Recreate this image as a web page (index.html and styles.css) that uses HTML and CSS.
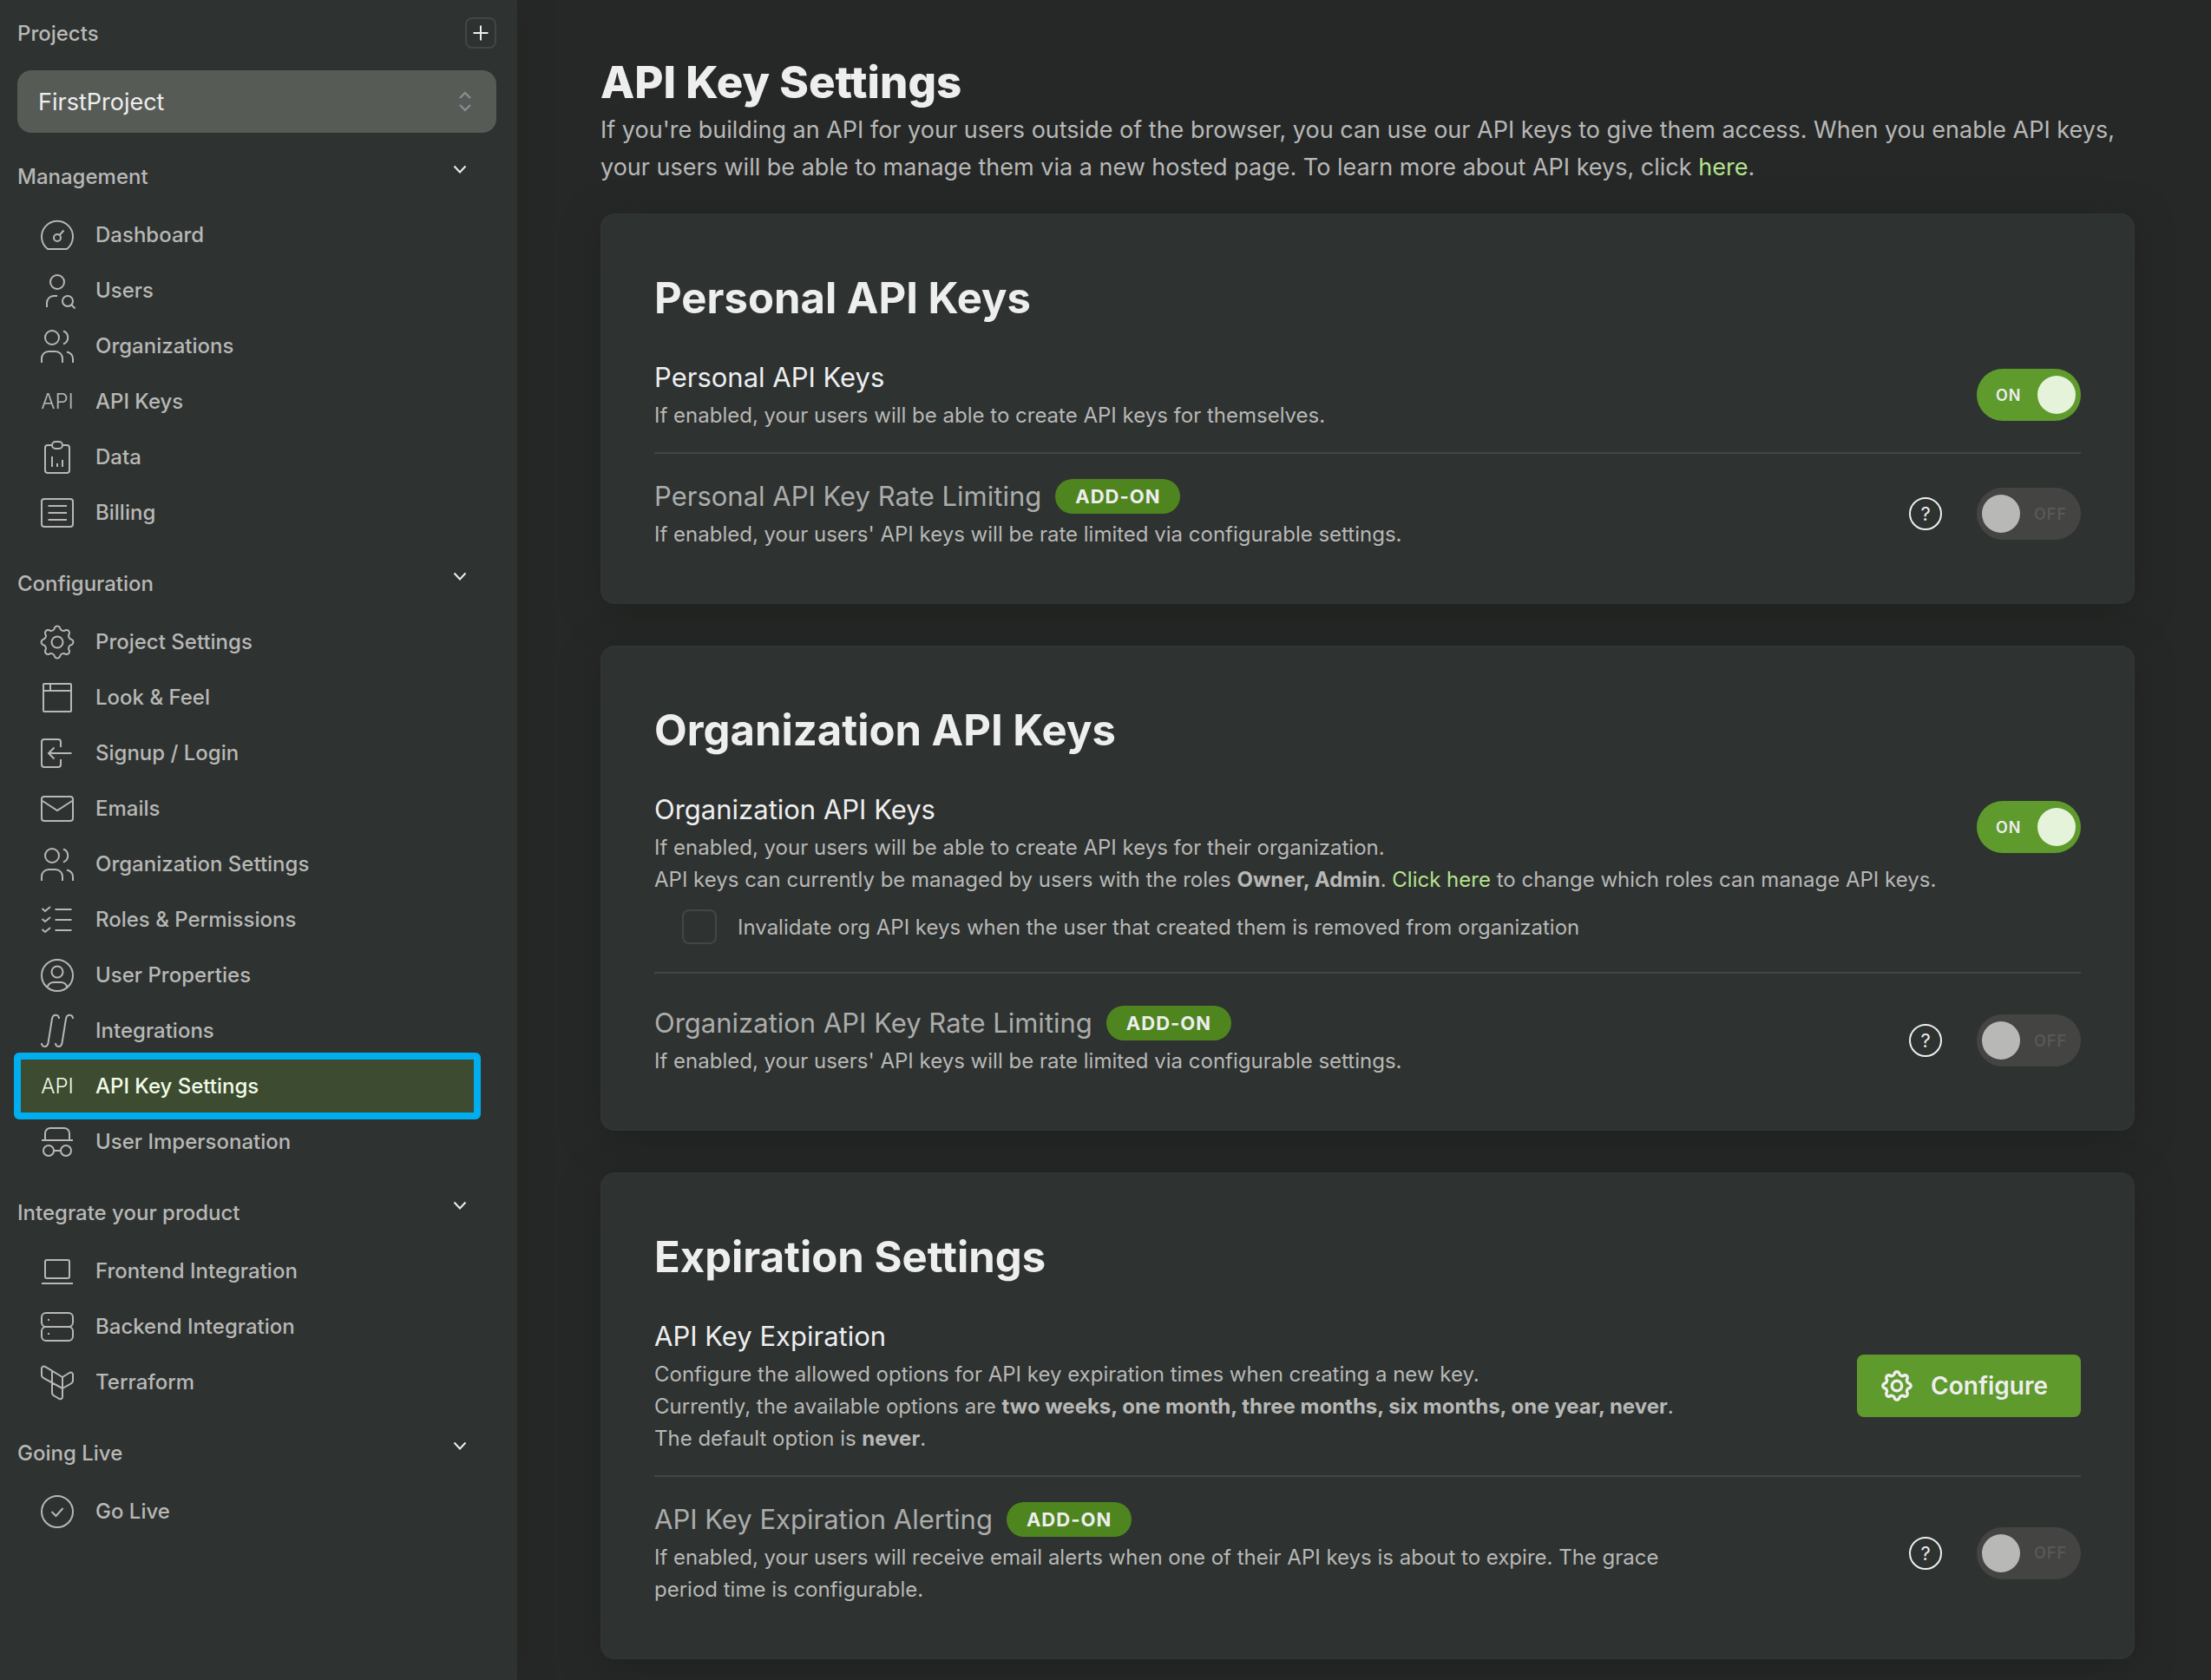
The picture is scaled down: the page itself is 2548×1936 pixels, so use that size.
FILE: index.html
```html
<!DOCTYPE html>
<html lang="en">
<head>
<meta charset="utf-8">
<meta name="viewport" content="width=device-width, initial-scale=1">
<title>API Key Settings</title>
<link rel="stylesheet" href="styles.css">
</head>
<body>
<svg class="sprite" aria-hidden="true">
  <symbol id="i-dashboard" viewBox="0 0 48 48"><path d="M13 40A18 18 0 1 1 35 40Z"/><circle cx="24" cy="27" r="4"/><path d="M27 23.500l4.500-5"/></symbol>
  <symbol id="i-users" viewBox="0 0 48 48"><circle cx="24" cy="14" r="8"/><path d="M12 43v-5a8 8 0 0 1 8-8h4"/><circle cx="36" cy="36" r="6"/><path d="M40.500 40.500l4 4"/></symbol>
  <symbol id="i-orgs" viewBox="0 0 48 48"><circle cx="18" cy="14" r="8"/><path d="M31 6.500a8 8 0 0 1 0 15M6 43v-5a8 8 0 0 1 8-8h8a8 8 0 0 1 8 8v5M35 30.500c4 1 7 4 7 8V43"/></symbol>
  <symbol id="i-data" viewBox="0 0 48 48"><path d="M17.500 10H13a3 3 0 0 0-3 3v26a3 3 0 0 0 3 3h22a3 3 0 0 0 3-3V13a3 3 0 0 0-3-3h-4.500M18 23v12M24 31v4M30 27v8"/><rect x="18" y="6" width="12" height="8" rx="4"/></symbol>
  <symbol id="i-billing" viewBox="0 0 48 48"><rect x="6" y="8" width="36" height="32" rx="3"/><path d="M13.500 16H35M13.500 24H35M13.500 32H35"/></symbol>
  <symbol id="i-gear" viewBox="0 0 48 48"><path d="M40.740 21.050A3.400 3.400 0 0 1 40.740 26.950A4.200 4.200 0 0 0 37.930 33.750A3.400 3.400 0 0 1 33.750 37.930A4.200 4.200 0 0 0 26.950 40.740A3.400 3.400 0 0 1 21.050 40.740A4.200 4.200 0 0 0 14.250 37.930A3.400 3.400 0 0 1 10.070 33.750A4.200 4.200 0 0 0 7.260 26.950A3.400 3.400 0 0 1 7.260 21.050A4.200 4.200 0 0 0 10.070 14.250A3.400 3.400 0 0 1 14.250 10.070A4.200 4.200 0 0 0 21.050 7.260A3.400 3.400 0 0 1 26.950 7.260A4.200 4.200 0 0 0 33.750 10.070A3.400 3.400 0 0 1 37.930 14.250A4.200 4.200 0 0 0 40.740 21.050Z"/><circle cx="24" cy="24" r="6.500"/></symbol>
  <symbol id="i-window" viewBox="0 0 48 48"><rect x="8" y="8" width="32" height="32" rx="1"/><path d="M8 16h32M16 8v8"/></symbol>
  <symbol id="i-login" viewBox="0 0 48 48"><path d="M28 17v-6a3 3 0 0 0-3-3H9a3 3 0 0 0-3 3v26a3 3 0 0 0 3 3h16a3 3 0 0 0 3-3v-6M40.500 24H14M20.500 17.500L14 24l6.500 6.500"/></symbol>
  <symbol id="i-mail" viewBox="0 0 48 48"><rect x="6" y="10" width="36" height="28" rx="3"/><path d="M7 15l17 11 17-11"/></symbol>
  <symbol id="i-roles" viewBox="0 0 48 48"><path d="M6.500 11l3.500 3 6-5M6.500 23l3.500 3 6-5M6.500 35l3.500 3 6-5M21.500 12h19M21.500 24h19M21.500 36h19"/></symbol>
  <symbol id="i-profile" viewBox="0 0 48 48"><circle cx="24" cy="24" r="18"/><circle cx="24" cy="20" r="6.500"/><path d="M12.500 38c1-4 4-6 7.500-6h8c3.500 0 6.500 2 7.500 6"/></symbol>
  <symbol id="i-integrations" viewBox="0 0 48 48"><path d="M6 38c0 5 6.500 5.500 7.500 0L18 10c1-6 8-5.500 8 0M22 38c0 5 6.500 5.500 7.500 0L34 10c1-6 8-5.500 8 0"/></symbol>
  <symbol id="i-incognito" viewBox="0 0 48 48"><path d="M10 22v-8a6 6 0 0 1 6-6h16a6 6 0 0 1 6 6v8M6 22h36M20 34h8"/><circle cx="14" cy="34" r="6"/><circle cx="34" cy="34" r="6"/></symbol>
  <symbol id="i-laptop" viewBox="0 0 48 48"><rect x="10" y="11" width="28" height="21" rx="2"/><path d="M6 38h36"/></symbol>
  <symbol id="i-server" viewBox="0 0 48 48"><rect x="6" y="8" width="36" height="16" rx="5"/><rect x="6" y="24" width="36" height="16" rx="5"/><path d="M13 16h2M13 32h2"/></symbol>
  <symbol id="i-terraform" viewBox="0 0 48 48"><path d="M6 8c0-2 2-3 4-2l20 12v13L8 19c-1.500-1-2-2-2-3zM18 11v25c0 1 .500 2 1.500 3l6 3.500c2 1.500 4.500.500 4.500-2V18l8-5c2-1 4 0 4 2v7c0 1-.500 2-1.500 3L30 31"/></symbol>
  <symbol id="i-check" viewBox="0 0 48 48"><circle cx="24" cy="24" r="18"/><path d="M17.500 24l5 5 8-9"/></symbol>
  <symbol id="i-down" viewBox="0 0 16 16"><path d="M1.500 4.500L8 11.500l6.500-7"/></symbol>
</svg>
<div class="layout">
  <aside class="sidebar">
    <div class="projects">
      <span>Projects</span>
      <button class="add" type="button" aria-label="New project"><svg viewBox="0 0 20 20"><path d="M10 1.500v17M1.500 10h17"/></svg></button>
    </div>
    <button class="picker" type="button"><span>FirstProject</span><svg viewBox="0 0 16 24"><path d="M2 8l6-6 6 6M2 16l6 6 6-6"/></svg></button>
    <nav class="nav">
      <section>
        <button class="group" type="button">Management<svg><use href="#i-down"/></svg></button>
        <ul>
          <li><a href="#"><svg><use href="#i-dashboard"/></svg>Dashboard</a></li>
          <li><a href="#"><svg><use href="#i-users"/></svg>Users</a></li>
          <li><a href="#"><svg><use href="#i-orgs"/></svg>Organizations</a></li>
          <li><a href="#"><span class="api" aria-hidden="true">API</span>API Keys</a></li>
          <li><a href="#"><svg><use href="#i-data"/></svg>Data</a></li>
          <li><a href="#"><svg><use href="#i-billing"/></svg>Billing</a></li>
        </ul>
      </section>
      <section>
        <button class="group" type="button">Configuration<svg><use href="#i-down"/></svg></button>
        <ul>
          <li><a href="#"><svg><use href="#i-gear"/></svg>Project Settings</a></li>
          <li><a href="#"><svg><use href="#i-window"/></svg>Look &amp; Feel</a></li>
          <li><a href="#"><svg><use href="#i-login"/></svg>Signup / Login</a></li>
          <li><a href="#"><svg><use href="#i-mail"/></svg>Emails</a></li>
          <li><a href="#"><svg><use href="#i-orgs"/></svg>Organization Settings</a></li>
          <li><a href="#"><svg><use href="#i-roles"/></svg>Roles &amp; Permissions</a></li>
          <li><a href="#"><svg><use href="#i-profile"/></svg>User Properties</a></li>
          <li><a href="#"><svg><use href="#i-integrations"/></svg>Integrations</a></li>
          <li><a class="active" href="#" aria-current="page"><span class="api" aria-hidden="true">API</span>API Key Settings</a></li>
          <li><a href="#"><svg><use href="#i-incognito"/></svg>User Impersonation</a></li>
        </ul>
      </section>
      <section>
        <button class="group" type="button">Integrate your product<svg><use href="#i-down"/></svg></button>
        <ul>
          <li><a href="#"><svg><use href="#i-laptop"/></svg>Frontend Integration</a></li>
          <li><a href="#"><svg><use href="#i-server"/></svg>Backend Integration</a></li>
          <li><a href="#"><svg><use href="#i-terraform"/></svg>Terraform</a></li>
        </ul>
      </section>
      <section>
        <button class="group" type="button">Going Live<svg><use href="#i-down"/></svg></button>
        <ul>
          <li><a href="#"><svg><use href="#i-check"/></svg>Go Live</a></li>
        </ul>
      </section>
    </nav>
  </aside>

  <main class="main">
    <header class="intro">
      <h1>API Key Settings</h1>
      <p>If you're building an API for your users outside of the browser, you can use our API keys to give them access. When you enable API keys, your users will be able to manage them via a new hosted page. To learn more about API keys, click <a href="#">here</a>.</p>
    </header>

    <section class="card">
      <h2>Personal API Keys</h2>
      <div class="row">
        <div class="text">
          <h3 id="personal">Personal API Keys</h3>
          <p>If enabled, your users will be able to create API keys for themselves.</p>
        </div>
        <label class="toggle"><input type="checkbox" role="switch" aria-labelledby="personal" checked><span>ON</span></label>
      </div>
      <hr>
      <div class="row">
        <div class="text">
          <h3 class="muted"><span id="personal-rate">Personal API Key Rate Limiting</span><span class="badge">ADD-ON</span></h3>
          <p>If enabled, your users' API keys will be rate limited via configurable settings.</p>
        </div>
        <button class="help" type="button" aria-label="About rate limiting">?</button>
        <label class="toggle"><input type="checkbox" role="switch" aria-labelledby="personal-rate" disabled><span>OFF</span></label>
      </div>
    </section>

    <section class="card">
      <h2>Organization API Keys</h2>
      <div class="row">
        <div class="text">
          <h3 id="org">Organization API Keys</h3>
          <p>If enabled, your users will be able to create API keys for their organization.</p>
        </div>
        <label class="toggle"><input type="checkbox" role="switch" aria-labelledby="org" checked><span>ON</span></label>
      </div>
      <p>API keys can currently be managed by users with the roles <b>Owner, Admin</b>. <a href="#">Click here</a> to change which roles can manage API keys.</p>
      <label class="option"><input type="checkbox">Invalidate org API keys when the user that created them is removed from organization</label>
      <hr class="spaced">
      <div class="row">
        <div class="text">
          <h3 class="muted"><span id="org-rate">Organization API Key Rate Limiting</span><span class="badge">ADD-ON</span></h3>
          <p>If enabled, your users' API keys will be rate limited via configurable settings.</p>
        </div>
        <button class="help" type="button" aria-label="About rate limiting">?</button>
        <label class="toggle"><input type="checkbox" role="switch" aria-labelledby="org-rate" disabled><span>OFF</span></label>
      </div>
    </section>

    <section class="card">
      <h2>Expiration Settings</h2>
      <div class="row">
        <div class="text">
          <h3>API Key Expiration</h3>
          <p>Configure the allowed options for API key expiration times when creating a new key.<br>Currently, the available options are <b>two weeks, one month, three months, six months, one year, never</b>.<br>The default option is <b>never</b>.</p>
        </div>
        <button class="configure" type="button"><svg><use href="#i-gear"/></svg>Configure</button>
      </div>
      <hr>
      <div class="row">
        <div class="text">
          <h3 class="muted"><span id="alerting">API Key Expiration Alerting</span><span class="badge">ADD-ON</span></h3>
          <p>If enabled, your users will receive email alerts when one of their API keys is about to expire. The grace period time is configurable.</p>
        </div>
        <button class="help" type="button" aria-label="About expiration alerting">?</button>
        <label class="toggle"><input type="checkbox" role="switch" aria-labelledby="alerting" disabled><span>OFF</span></label>
      </div>
    </section>
  </main>
</div>
</body>
</html>
```
FILE: styles.css
```css
* { box-sizing: border-box; }

body {
  margin: 0;
  background: #262828;
  color: #b8b8b6;
  font-family: Inter, "Liberation Sans", sans-serif;
  font-size: 24px;
}

h1, h2, h3, p, ul { margin: 0; padding: 0; }
ul { list-style: none; }
a { color: #b5e48c; text-decoration: none; }
button { border: 0; background: none; color: inherit; font: inherit; cursor: pointer; }
svg { fill: none; stroke: currentColor; stroke-width: 2; flex: none; }
.sprite { display: none; }

.layout { display: flex; min-height: 100vh; }

/* Sidebar */
.sidebar {
  flex: none;
  width: 596px;
  padding: 20px 24px 64px 20px;
  background: #2e3231;
  box-shadow: 0 0 28px #232520;
  font-weight: 500;
}
.projects { display: flex; justify-content: space-between; align-items: center; }
.add {
  display: grid;
  place-items: center;
  width: 36px;
  height: 36px;
  padding: 0;
  border: 2px solid #454545;
  border-radius: 8px;
  color: #eeeeef;
}
.add svg { width: 20px; height: 20px; }
.picker {
  display: flex;
  justify-content: space-between;
  align-items: center;
  width: 100%;
  height: 72px;
  margin: 25px 0 34px;
  padding: 0 28px 0 24px;
  border-radius: 16px;
  background: #575b56;
  color: #eeeeef;
  font-size: 27px;
  font-weight: 400;
}
.picker svg { width: 16px; height: 24px; color: #8b919b; }
.nav { display: flex; flex-direction: column; gap: 35px; }
.nav ul { display: flex; flex-direction: column; gap: 3px; margin: 20px 26px 0 4px; }
.group {
  display: flex;
  justify-content: space-between;
  width: 100%;
  padding: 0 34px 0 0;
  line-height: 33px;
  text-align: left;
}
.group svg { width: 16px; height: 16px; color: #eeeeef; }
.nav a {
  display: flex;
  align-items: center;
  gap: 20px;
  height: 61px;
  padding-left: 18px;
  color: inherit;
}
.nav a svg, .api { width: 48px; height: 48px; }
.api { flex: none; font-size: 24px; font-weight: 300; line-height: 48px; text-align: center; }
.nav .active {
  height: 77px;
  margin: -8px;
  border: 8px solid #00aeef;
  border-radius: 6px;
  background: #3d4b31;
  color: #f1fbe8;
}

/* Main column */
.main {
  flex: 1;
  display: flex;
  flex-direction: column;
  gap: 48px;
  min-width: 0;
  padding: 62px 88px 24px 96px;
}
h1, h2 { color: #eeeeef; }
h1 { font-size: 51px; font-weight: 800; line-height: 66px; }
h2 { margin-bottom: 33px; font-size: 49px; font-weight: 700; line-height: 72px; }
.intro { margin-bottom: -16px; }
.intro p { font-size: 27px; line-height: 43px; }
.card {
  padding: 60px;
  border: 2px solid #303432;
  border-radius: 16px;
  background: #2e3231;
  box-shadow: 0 8px 40px #20221e;
}
.card p { line-height: 37px; }
.card b { font-weight: 700; }
h3 {
  display: flex;
  align-items: center;
  gap: 16px;
  height: 43px;
  color: #eeeeef;
  font-size: 31px;
  font-weight: 400;
}
.text p { margin-top: 4px; }
h3.muted { color: #acacaa; }
.badge {
  padding: 0 23px;
  border-radius: 20px;
  background: #4f851f;
  color: #eeeeef;
  font-size: 22px;
  font-weight: 700;
  letter-spacing: 1px;
  line-height: 40px;
}
.row { display: flex; align-items: center; gap: 40px; }
.text { flex: 0 1 1200px; }
.row > :nth-child(2) { margin-left: auto; }
hr { height: 2px; margin: 24px 0 27px; border: 0; background: #454645; }
hr.spaced { margin: 32px 0 35px; }

.toggle {
  position: relative;
  flex: none;
  display: flex;
  align-items: center;
  width: 120px;
  height: 60px;
  padding-left: 22px;
  border-radius: 30px;
  background: #5f9a2c;
  color: #eeeeef;
  font-size: 18px;
  font-weight: 600;
  letter-spacing: 1px;
}
.toggle input {
  appearance: none;
  position: absolute;
  right: 6px;
  width: 44px;
  height: 44px;
  margin: 0;
  border-radius: 50%;
  background: #e4f3da;
}
.toggle:has(:disabled) { padding-left: 66px; background: #444543; color: #575857; }
.toggle input:disabled { right: auto; left: 6px; background: #b8b8b6; }
.help {
  flex: none;
  width: 38px;
  height: 38px;
  padding: 0;
  border: 2px solid #eeeeef;
  border-radius: 50%;
  color: #eeeeef;
  font-size: 22px;
}
.option { display: flex; align-items: center; gap: 24px; margin: 16px 0 0 32px; }
.option input {
  appearance: none;
  width: 40px;
  height: 40px;
  margin: 0;
  border: 2px solid #454645;
  border-radius: 8px;
}
.configure {
  display: flex;
  align-items: center;
  gap: 18px;
  height: 72px;
  padding: 0 38px 0 25px;
  border-radius: 8px;
  background: #5f9a2c;
  color: #eeeeef;
  font-size: 28px;
  font-weight: 600;
}
.configure svg { width: 42px; height: 42px; stroke-width: 4; }
```
